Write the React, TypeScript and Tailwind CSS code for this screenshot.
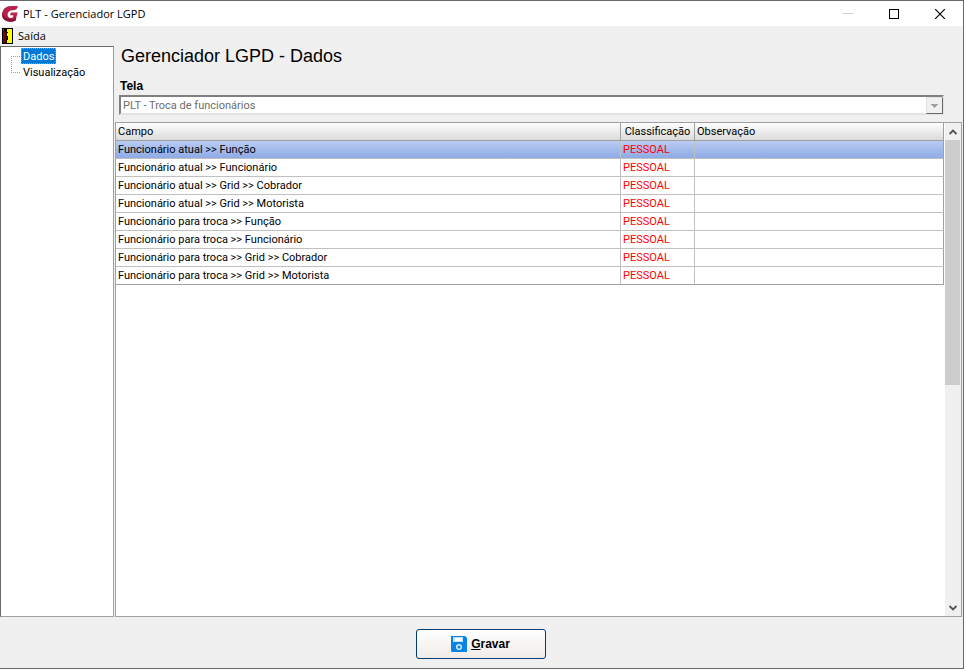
import React from "react";

const rows = [
  "Funcionário atual >> Função",
  "Funcionário atual >> Funcionário",
  "Funcionário atual >> Grid >> Cobrador",
  "Funcionário atual >> Grid >> Motorista",
  "Funcionário para troca >> Função",
  "Funcionário para troca >> Funcionário",
  "Funcionário para troca >> Grid >> Cobrador",
  "Funcionário para troca >> Grid >> Motorista",
];

function Logo() {
  return (
    <svg className="size-4" viewBox="0 0 16 16" aria-hidden="true">
      <path d="M16 0.200C10 0 5.500 0 3 2C-0.500 4.800 -0.800 10.500 1.800 13.300C4.500 16.300 10 16.300 13.600 14.500L15.600 6.500H9L8 9.300H11.400L10.800 11.500C8.500 12.600 5.800 11.600 5.600 9C5.400 6 7.500 4.300 11 4.200C13.800 4.100 15.200 2.800 16 0.200Z" fill="#b8214a" />
      <path d="M0.300 6.500C2 12 7 14.500 14.200 12L13.600 14.500C10 16.300 4.500 16.300 1.800 13.300C0.400 11.800 -0.100 9 0.300 6.500Z" fill="#841736" />
    </svg>
  );
}

function DoorIcon() {
  return (
    <svg className="h-4 w-[11px]" viewBox="0 0 11 16" shapeRendering="crispEdges" aria-hidden="true">
      <rect width="11" height="16" fill="#000" />
      <rect x="5" y="1" width="5" height="14" fill="#ff0" />
      <path d="M1 2H2V3H3V4H4V14H3V15H1Z" fill="#800000" />
      <path d="M1 1H2V2H1Z" fill="#008080" />
      <path d="M5 4H6V5H5ZM5 8H6V12H5Z" fill="#000" />
    </svg>
  );
}

function SaveIcon() {
  return (
    <svg className="size-4" viewBox="0 0 16 16" aria-hidden="true">
      <path d="M0 0H14L16 2V16H1L0 15Z" fill="#0883e6" />
      <path d="M2 1H12V6H2Z" fill="#bfe1f8" />
      <path d="M4 2H11V5H4Z" fill="#fff" />
      <circle cx="8" cy="11" r="2.300" fill="#0883e6" stroke="#d4ecfc" strokeWidth="1.500" />
    </svg>
  );
}

function TitleBar() {
  return (
    <header className="flex h-[25px] items-center bg-white pl-0.5">
      <Logo />
      <span className="ml-[5px] flex-1 whitespace-nowrap font-['Open_Sans','Segoe_UI',sans-serif]">PLT - Gerenciador LGPD</span>
      <button aria-label="Minimizar" disabled className="flex h-full w-[46px] items-center justify-center">
        <svg width="10" height="10" viewBox="0 0 10 10" shapeRendering="crispEdges"><path d="M0 4H10V5H0Z" fill="#ccc" /></svg>
      </button>
      <button aria-label="Maximizar" className="flex h-full w-[46px] items-center justify-center">
        <svg width="10" height="10" viewBox="0 0 10 10" shapeRendering="crispEdges"><path d="M.5 .5H9.500V9.500H.5Z" fill="none" stroke="#000" /></svg>
      </button>
      <button aria-label="Fechar" className="flex h-full w-[46px] items-center justify-center">
        <svg width="10" height="10" viewBox="0 0 10 10"><path d="M0 0L10 10M10 0L0 10" fill="none" stroke="#000" strokeWidth="1.200" /></svg>
      </button>
    </header>
  );
}

function Sidebar() {
  return (
    <nav aria-label="Seções" className="flex w-[114px] shrink-0 border border-t-[#696969] border-r-[#a0a0a0] border-b-[#a0a0a0] border-l-[#696969] bg-white pt-px pl-2.5">
      <svg width="10" height="32" viewBox="0 0 10 32" shapeRendering="crispEdges" aria-hidden="true">
        <path d="M.5 8V25M0 8.500H10M0 24.500H10" fill="none" stroke="#a0a0a0" strokeDasharray="1 1" />
      </svg>
      <ul>
        <li className="flex h-4">
          <button className="border border-dotted border-[#ff8728] bg-[#0078d7] px-px pt-0.5 leading-3 text-white">Dados</button>
        </li>
        <li className="flex h-4">
          <button className="px-0.5 pt-0.5 leading-[14px]">Visualização</button>
        </li>
      </ul>
    </nav>
  );
}

function ScrollBar() {
  return (
    <div className="ml-px flex w-4 shrink-0 flex-col bg-[#f0f0f0]">
      <button aria-label="Rolar para cima" className="flex h-[17px] items-center justify-center">
        <svg width="8" height="6" viewBox="0 0 8 6"><path d="M.5 5L4 1.500L7.500 5" fill="none" stroke="#505050" strokeWidth="1.800" /></svg>
      </button>
      <div className="flex flex-1 flex-col">
        <div className="w-[15px] flex-[245] bg-[#cdcdcd]" />
        <div className="flex-[214]" />
      </div>
      <button aria-label="Rolar para baixo" className="flex h-[17px] items-center justify-center">
        <svg width="8" height="6" viewBox="0 0 8 6"><path d="M.5 1L4 4.500L7.500 1" fill="none" stroke="#505050" strokeWidth="1.800" /></svg>
      </button>
    </div>
  );
}

function DataGrid() {
  return (
    <div className="flex flex-1 border border-[#a0a0a0] bg-white">
      <div className="flex-1">
        <table className="w-full table-fixed border-separate border-spacing-0">
          <colgroup>
            <col />
            <col className="w-[74px]" />
            <col className="w-[249px]" />
          </colgroup>
          <thead>
            <tr className="h-[18px] bg-linear-to-b from-white to-[#d8d8d8] text-left">
              <th className="border-r border-b border-[#a0a0a0] p-0 pt-px pl-0.5 font-normal">Campo</th>
              <th className="border-r border-b border-[#a0a0a0] p-0 pt-px text-center font-normal">Classificação</th>
              <th className="border-r border-b border-[#a0a0a0] p-0 pt-px pl-0.5 font-normal">Observação</th>
            </tr>
          </thead>
          <tbody>
            {rows.map((row, i) => {
              const line = i === rows.length - 1 ? "border-b-[#a0a0a0]" : "border-b-[#c0c0c0]";
              return (
                <tr key={row} className={i === 0 ? "h-[18px] bg-linear-to-b from-[#b9cbf1] to-[#8ca9e6]" : "h-[18px]"}>
                  <td className={"border-r border-b border-r-[#c0c0c0] p-0 pt-px pl-0.5 " + line}>{row}</td>
                  <td className={"border-r border-b border-r-[#c0c0c0] p-0 pt-px pl-0.5 text-[#f00] " + line}>PESSOAL</td>
                  <td className={"border-r border-b border-r-[#a0a0a0] p-0 pt-px pl-0.5 " + line} />
                </tr>
              );
            })}
          </tbody>
        </table>
      </div>
      <ScrollBar />
    </div>
  );
}

export default function App() {
  return (
    <div className="flex min-h-screen flex-col bg-white pr-0.5 pb-0.5 font-[Roboto,'Liberation_Sans',Arial,sans-serif] text-[11px] leading-4 text-black">
      <div className="flex flex-1 flex-col border-t border-r border-b border-[#696969] bg-[#f0f0f0]">
        <TitleBar />
        <div className="flex h-5 items-center pl-0.5">
          <button className="flex items-center gap-[5px] font-['Open_Sans','Segoe_UI',sans-serif]">
            <DoorIcon />
            Saída
          </button>
        </div>
        <div className="flex flex-1 gap-px pr-px">
          <Sidebar />
          <main className="flex min-w-0 flex-1 flex-col">
            <h1 className="pl-1.5 font-['Liberation_Sans',Arial,sans-serif] text-lg leading-5">Gerenciador LGPD - Dados</h1>
            <label htmlFor="tela" className="mt-3 pl-[5px] font-['Liberation_Sans',Arial,sans-serif] text-xs leading-4 font-bold">Tela</label>
            <div className="relative mt-px mr-[18px] ml-1">
              <select
                id="tela"
                disabled
                className="block h-5 w-full appearance-none border-2 border-t-[#808080] border-r-[#e3e3e3] border-b-[#e3e3e3] border-l-[#808080] bg-white pt-0.5 pl-0.5 text-[11px] leading-[14px] text-[#6d6d6d] opacity-100"
              >
                <option>PLT - Troca de funcionários</option>
              </select>
              <span className="pointer-events-none absolute top-0.5 right-px flex h-[17px] w-[17px] items-center justify-center border border-t-[#e3e3e3] border-r-[#696969] border-b-[#696969] border-l-[#e3e3e3] bg-[#f0f0f0]">
                <svg width="7" height="4" viewBox="0 0 7 4" shapeRendering="crispEdges"><path d="M0 0H7L3.500 4Z" fill="#a0a0a0" /></svg>
              </span>
            </div>
            <div className="mt-[7px] flex flex-1">
              <DataGrid />
            </div>
          </main>
        </div>
        <footer className="flex justify-center pt-3 pr-0.5 pb-[9px]">
          <button className="flex h-[30px] w-[130px] items-center justify-center gap-1 rounded-[3px] border border-[#003c74] bg-linear-to-b from-white to-[#f0ebe8] font-['Liberation_Sans',Arial,sans-serif] text-xs font-bold">
            <SaveIcon />
            <span><u>G</u>ravar</span>
          </button>
        </footer>
      </div>
    </div>
  );
}
